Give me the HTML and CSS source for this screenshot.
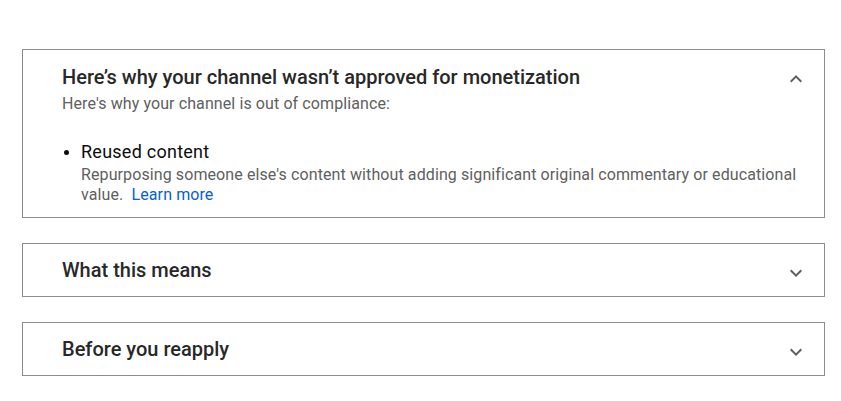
FILE: index.html
```html
<!DOCTYPE html>
<html lang="en">
<head>
<meta charset="utf-8">
<title>Monetization status</title>
<link rel="stylesheet" href="styles.css">
</head>
<body>
<main class="page">
  <section class="card card-open">
    <div class="card-header">
      <div class="card-text">
        <h2 class="card-title">Here’s why your channel wasn’t approved for monetization</h2>
        <p class="card-sub">Here's why your channel is out of compliance:</p>
      </div>
      <svg class="chev" viewBox="0 0 24 24" width="24" height="24" aria-hidden="true"><path d="M12 8l-6 6 1.41 1.41L12 10.83l4.59 4.58L18 14z"/></svg>
    </div>
    <ul class="reasons">
      <li class="reason">
        <span class="dot"></span>
        <div class="reason-body">
          <div class="reason-title">Reused content</div>
          <div class="reason-desc">Repurposing someone else's content without adding significant original commentary or educational value.&nbsp; <a class="link" href="#">Learn more</a></div>
        </div>
      </li>
    </ul>
  </section>

  <section class="card">
    <div class="card-header">
      <div class="card-text">
        <h2 class="card-title">What this means</h2>
      </div>
      <svg class="chev" viewBox="0 0 24 24" width="24" height="24" aria-hidden="true"><path d="M16.59 8.59L12 13.17 7.41 8.59 6 10l6 6 6-6z"/></svg>
    </div>
  </section>

  <section class="card">
    <div class="card-header">
      <div class="card-text">
        <h2 class="card-title">Before you reapply</h2>
      </div>
      <svg class="chev" viewBox="0 0 24 24" width="24" height="24" aria-hidden="true"><path d="M16.59 8.59L12 13.17 7.41 8.59 6 10l6 6 6-6z"/></svg>
    </div>
  </section>
</main>
</body>
</html>
```

FILE: styles.css
```css
* { box-sizing: border-box; }
html, body { margin: 0; background: #fff; }
body { font-family: Roboto, "Noto Sans", Arial, sans-serif; color: #0d0d0d; }

.page {
  padding: 49px 0 0 22px;
  display: flex;
  flex-direction: column;
  gap: 25px;
  width: 825px;
}

.card {
  width: 803px;
  border: 1px solid #8c8c8c;
  background: #fff;
}
.card-open { padding-bottom: 12px; }

.card-header {
  display: flex;
  align-items: flex-start;
  padding: 14px 16px 14px 39px;
}
.card-open .card-header { padding-top: 15px; padding-bottom: 0; }

.card-text { flex: 1; min-width: 0; }

.card-title {
  margin: 0;
  font-size: 20px;
  line-height: 24px;
  height: 24px;
  font-weight: 500;
  color: #282828;
}
.card-sub {
  margin: 5px 0 0;
  font-size: 16px;
  line-height: 20px;
  letter-spacing: 0.1px;
  color: #606060;
}

.chev {
  flex: none;
  display: block;
  margin-top: 3px;
  margin-bottom: -3px;
  fill: #606060;
}
.card-open .chev { margin-top: 2px; margin-bottom: -2px; }

.reasons {
  list-style: none;
  margin: 26px 0 0;
  padding: 0 24px 0 41px;
}
.reason { display: flex; }
.dot {
  flex: none;
  width: 5px;
  height: 5px;
  border-radius: 50%;
  background: #0d0d0d;
  margin-top: 10px;
  margin-right: 12px;
}
.reason-title {
  font-size: 18px;
  line-height: 24px;
  letter-spacing: 0.25px;
  color: #0d0d0d;
}
.reason-desc {
  padding-top: 1px;
  font-size: 16px;
  line-height: 20px;
  letter-spacing: 0.1px;
  color: #606060;
}
.link { color: #065fd4; text-decoration: none; }
```
